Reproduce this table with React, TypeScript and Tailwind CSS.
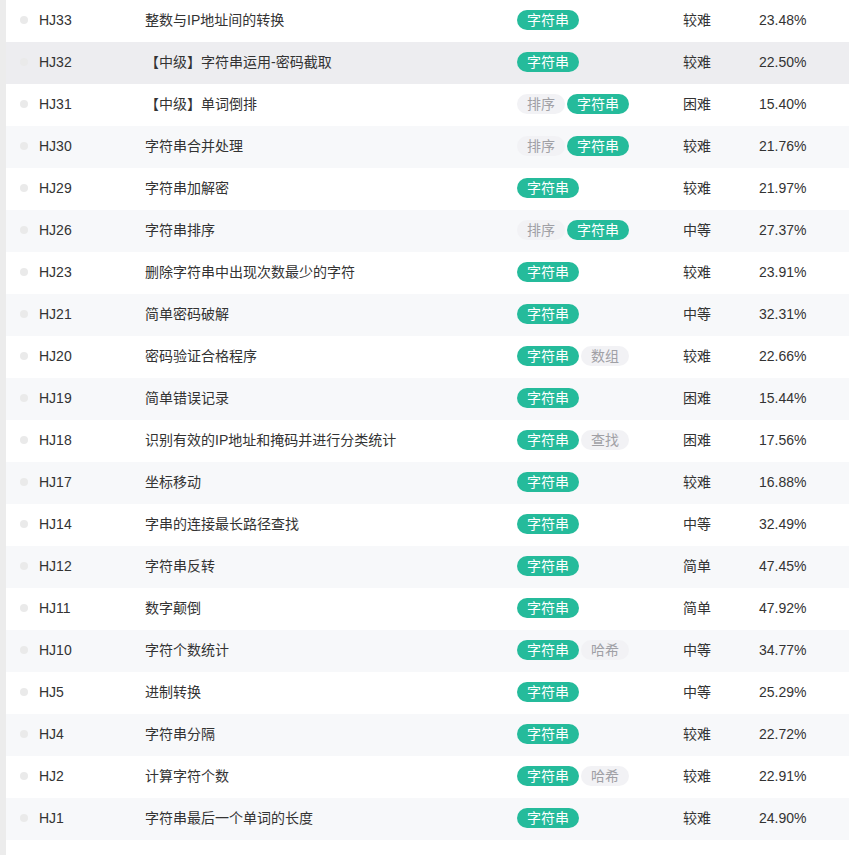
const problems = [
  { id: "HJ33", title: "整数与IP地址间的转换", tags: ["字符串"], level: "较难", rate: "23.48%" },
  { id: "HJ32", title: "【中级】字符串运用-密码截取", tags: ["字符串"], level: "较难", rate: "22.50%" },
  { id: "HJ31", title: "【中级】单词倒排", tags: ["排序", "字符串"], level: "困难", rate: "15.40%" },
  { id: "HJ30", title: "字符串合并处理", tags: ["排序", "字符串"], level: "较难", rate: "21.76%" },
  { id: "HJ29", title: "字符串加解密", tags: ["字符串"], level: "较难", rate: "21.97%" },
  { id: "HJ26", title: "字符串排序", tags: ["排序", "字符串"], level: "中等", rate: "27.37%" },
  { id: "HJ23", title: "删除字符串中出现次数最少的字符", tags: ["字符串"], level: "较难", rate: "23.91%" },
  { id: "HJ21", title: "简单密码破解", tags: ["字符串"], level: "中等", rate: "32.31%" },
  { id: "HJ20", title: "密码验证合格程序", tags: ["字符串", "数组"], level: "较难", rate: "22.66%" },
  { id: "HJ19", title: "简单错误记录", tags: ["字符串"], level: "困难", rate: "15.44%" },
  { id: "HJ18", title: "识别有效的IP地址和掩码并进行分类统计", tags: ["字符串", "查找"], level: "困难", rate: "17.56%" },
  { id: "HJ17", title: "坐标移动", tags: ["字符串"], level: "较难", rate: "16.88%" },
  { id: "HJ14", title: "字串的连接最长路径查找", tags: ["字符串"], level: "中等", rate: "32.49%" },
  { id: "HJ12", title: "字符串反转", tags: ["字符串"], level: "简单", rate: "47.45%" },
  { id: "HJ11", title: "数字颠倒", tags: ["字符串"], level: "简单", rate: "47.92%" },
  { id: "HJ10", title: "字符个数统计", tags: ["字符串", "哈希"], level: "中等", rate: "34.77%" },
  { id: "HJ5", title: "进制转换", tags: ["字符串"], level: "中等", rate: "25.29%" },
  { id: "HJ4", title: "字符串分隔", tags: ["字符串"], level: "较难", rate: "22.72%" },
  { id: "HJ2", title: "计算字符个数", tags: ["字符串", "哈希"], level: "较难", rate: "22.91%" },
  { id: "HJ1", title: "字符串最后一个单词的长度", tags: ["字符串"], level: "较难", rate: "24.90%" },
];

// 字符串 is the highlighted tag, the rest are plain gray
const Tag = ({ name }: { name: string }) => {
  const active = name === "字符串";
  return (
    <span
      className={
        active
          ? "h-5 px-[10px] rounded-full bg-[#25bb9b] text-white leading-5"
          : "h-5 px-[10px] rounded-full bg-[#f2f2f5] text-[#a0a0a5] leading-5"
      }
    >
      {name}
    </span>
  );
};

const App = () => {
  return (
    <div
      className="flex min-h-[855px] bg-white text-[14px] text-[#333]"
      style={{ fontFamily: '"Liberation Sans", "Noto Sans CJK SC", sans-serif' }}
    >
      <div className="w-[6px] shrink-0 bg-[#ececec]"></div>
      <div className="flex-1">
        {problems.map((p, i) => (
          <div
            key={p.id}
            className={
              i === 1
                ? "flex h-[42px] pb-[2px] items-center bg-[#ededf0]"
                : i % 2 === 1
                ? "flex h-[42px] pb-[2px] items-center bg-[#f7f8fa]"
                : "flex h-[42px] pb-[2px] items-center bg-white"
            }
          >
            <div className="ml-[14px] h-2 w-2 shrink-0 rounded-full bg-[#eaeaea]"></div>
            <div className="ml-[11px] w-[106px] shrink-0">{p.id}</div>
            <div className="w-[372px] shrink-0">{p.title}</div>
            <div className="flex w-[166px] shrink-0 gap-[2px]">
              {p.tags.map((t) => (
                <Tag key={t} name={t} />
              ))}
            </div>
            <div className="w-[76px] shrink-0">{p.level}</div>
            <div>{p.rate}</div>
          </div>
        ))}
      </div>
    </div>
  );
};

export default App;
